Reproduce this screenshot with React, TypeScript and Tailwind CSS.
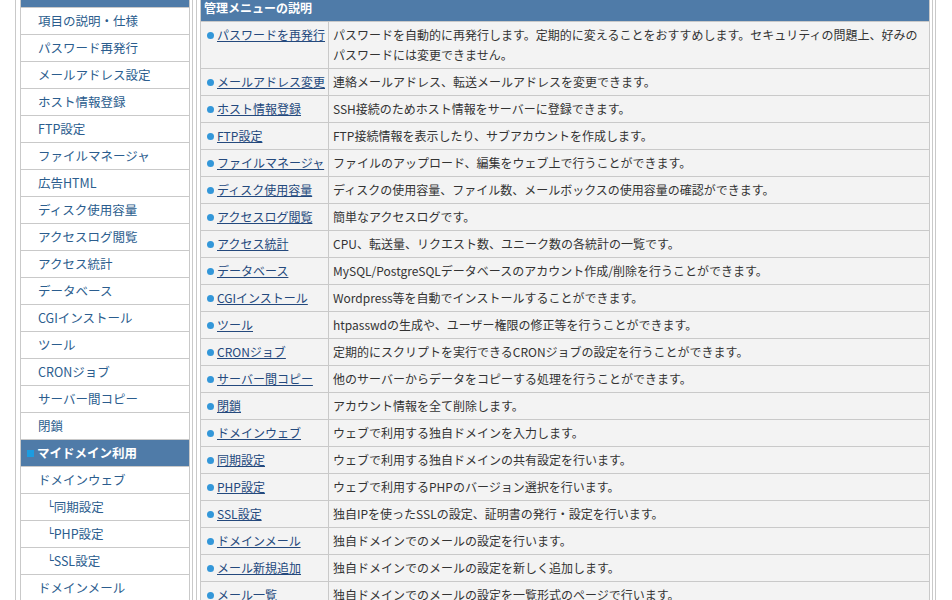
import React from "react";

type SideItem = { label: string; sub?: boolean; active?: boolean };

const sideItems: SideItem[] = [
  { label: "項目の説明・仕様" },
  { label: "パスワード再発行" },
  { label: "メールアドレス設定" },
  { label: "ホスト情報登録" },
  { label: "FTP設定" },
  { label: "ファイルマネージャ" },
  { label: "広告HTML" },
  { label: "ディスク使用容量" },
  { label: "アクセスログ閲覧" },
  { label: "アクセス統計" },
  { label: "データベース" },
  { label: "CGIインストール" },
  { label: "ツール" },
  { label: "CRONジョブ" },
  { label: "サーバー間コピー" },
  { label: "閉鎖" },
  { label: "マイドメイン利用", active: true },
  { label: "ドメインウェブ" },
  { label: "同期設定", sub: true },
  { label: "PHP設定", sub: true },
  { label: "SSL設定", sub: true },
  { label: "ドメインメール" },
  { label: "メール新規追加", sub: true },
  { label: "メール一覧", sub: true },
];

const rows: [string, string][] = [
  [
    "パスワードを再発行",
    "パスワードを自動的に再発行します。定期的に変えることをおすすめします。セキュリティの問題上、好みのパスワードには変更できません。",
  ],
  ["メールアドレス変更", "連絡メールアドレス、転送メールアドレスを変更できます。"],
  ["ホスト情報登録", "SSH接続のためホスト情報をサーバーに登録できます。"],
  ["FTP設定", "FTP接続情報を表示したり、サブアカウントを作成します。"],
  ["ファイルマネージャ", "ファイルのアップロード、編集をウェブ上で行うことができます。"],
  ["ディスク使用容量", "ディスクの使用容量、ファイル数、メールボックスの使用容量の確認ができます。"],
  ["アクセスログ閲覧", "簡単なアクセスログです。"],
  ["アクセス統計", "CPU、転送量、リクエスト数、ユニーク数の各統計の一覧です。"],
  ["データベース", "MySQL/PostgreSQLデータベースのアカウント作成/削除を行うことができます。"],
  ["CGIインストール", "Wordpress等を自動でインストールすることができます。"],
  ["ツール", "htpasswdの生成や、ユーザー権限の修正等を行うことができます。"],
  ["CRONジョブ", "定期的にスクリプトを実行できるCRONジョブの設定を行うことができます。"],
  ["サーバー間コピー", "他のサーバーからデータをコピーする処理を行うことができます。"],
  ["閉鎖", "アカウント情報を全て削除します。"],
  ["ドメインウェブ", "ウェブで利用する独自ドメインを入力します。"],
  ["同期設定", "ウェブで利用する独自ドメインの共有設定を行います。"],
  ["PHP設定", "ウェブで利用するPHPのバージョン選択を行います。"],
  ["SSL設定", "独自IPを使ったSSLの設定、証明書の発行・設定を行います。"],
  ["ドメインメール", "独自ドメインでのメールの設定を行います。"],
  ["メール新規追加", "独自ドメインでのメールの設定を新しく追加します。"],
  ["メール一覧", "独自ドメインでのメールの設定を一覧形式のページで行います。"],
  ["メール転送", "独自ドメインでのメールの転送設定を行います。"],
];

function SideRow({ item }: { item: SideItem }) {
  if (item.active) {
    return (
      <div className="flex h-[27px] items-center border-t border-[#c9c9c9] bg-[#4f7ba8] pl-[6px] font-bold text-white">
        <span className="mr-[3px] inline-block h-[7px] w-[7px] bg-[#1c9ce0]" />
        {item.label}
      </div>
    );
  }
  return (
    <div
      className={`flex h-[27px] items-center border-t border-[#c9c9c9] text-[#2b5d8e] ${
        item.sub ? "pl-[26px]" : "pl-[17px]"
      }`}
    >
      {item.sub && (
        <span className="text-[11px]" style={{ fontFamily: '"DejaVu Sans", sans-serif' }}>
          └
        </span>
      )}
      {item.label}
    </div>
  );
}

export default function App() {
  return (
    <div
      className="h-[600px] overflow-hidden bg-white"
      style={{ fontFamily: '"Noto Sans CJK JP", "Noto Sans", sans-serif' }}
    >
      <div className="ml-[15px] flex w-[921px] border-x border-[#c9c9c9]">
        {/* sidebar */}
        <div className="w-[177px] shrink-0 border-r border-[#c9c9c9] pl-[4px] pr-[2px] text-[12.5px]">
          <div className="border-x border-b border-[#c9c9c9]">
            <div className="h-[7px] bg-[#4f7ba8]" />
            {sideItems.map((it) => (
              <SideRow key={it.label + (it.sub ? "s" : "")} item={it} />
            ))}
          </div>
        </div>

        {/* main */}
        <div className="ml-[3px] w-[737px] shrink-0 border-x border-[#c9c9c9] pl-[3px] pr-[2px] text-[12px]">
          <div className="border-x border-b border-[#c9c9c9]">
            <div className="h-[21px] bg-[#4f7ba8] pl-[3px] font-bold leading-[16px] text-white">
              管理メニューの説明
            </div>
            {rows.map(([name, desc]) => (
              <div key={name} className="flex border-t border-[#c9c9c9] bg-[#f3f3f3] leading-[20px]">
                <div className="w-[128px] shrink-0 border-r border-[#c9c9c9] py-[3px] pl-[6px]">
                  <div className="flex h-[20px] items-center">
                    <span className="mr-[3px] inline-block h-[7px] w-[7px] rounded-full bg-[#3397d9]" />
                    <a href="#" className="text-[#24497d] underline">
                      {name}
                    </a>
                  </div>
                </div>
                <div className="flex-1 px-[4px] py-[3px] text-[#333333]">{desc}</div>
              </div>
            ))}
          </div>
        </div>
      </div>
    </div>
  );
}
